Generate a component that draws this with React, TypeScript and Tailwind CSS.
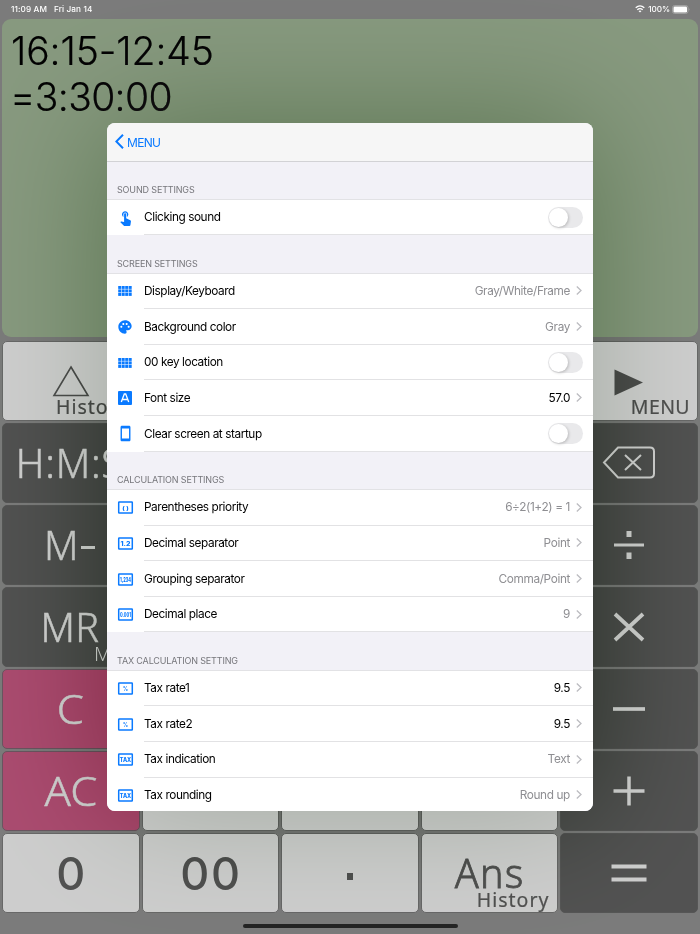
import React from "react";
import { MdTouchApp, MdPalette, MdStayCurrentPortrait } from "react-icons/md";

const UI = "font-['Inter','Liberation_Sans',sans-serif]";
const KEY = "font-['Noto_Sans','Open_Sans',sans-serif]";

type Tone = "light" | "dark" | "pink";

const tones: Record<Tone, string> = {
  light: "bg-[#cdcdcd] text-[#525252] border border-[#686868]",
  dark: "bg-[#525252] text-[#cdcdcd] border border-[#565656]",
  pink: "bg-[#aa4c70] text-[#cdcdcd] border border-[#6a5560]",
};

function Key({ tone, children }: { tone: Tone; children?: React.ReactNode }) {
  return (
    <div className={`relative flex items-center justify-center rounded-[5px] ${tones[tone]}`}>
      {children}
    </div>
  );
}

function Label({ children, className = "" }: { children: React.ReactNode; className?: string }) {
  return (
    <span
      className={`block whitespace-nowrap pt-[2px] text-[39.5px] font-light leading-none [-webkit-text-stroke:0.5px_currentColor] ${className}`}
    >
      {children}
    </span>
  );
}

function Sub({ children, className = "" }: { children: React.ReactNode; className?: string }) {
  return (
    <span className={`absolute whitespace-nowrap leading-none ${className}`}>{children}</span>
  );
}

function Stroke({ d, width = 4 }: { d: string; width?: number }) {
  return (
    <svg width="56" height="40" viewBox="-28 -20 56 40" fill="none" stroke="currentColor" strokeWidth={width}>
      <path d={d} />
    </svg>
  );
}

function Keypad() {
  return (
    <div
      className={`mx-[2px] mt-[3.5px] grid h-[572.5px] grid-cols-5 grid-rows-7 gap-x-[2px] gap-y-[1.5px] ${KEY}`}
    >
      <Key tone="light">
        <svg width="40" height="32" viewBox="-20 -16 40 32" fill="none" stroke="currentColor" strokeWidth="1.6">
          <path d="M0-14 17 14.500H-17Z" />
        </svg>
        <Sub className="left-[53px] top-[55.5px] text-[19.5px] tracking-[1px] [-webkit-text-stroke:0.2px_currentColor]">History</Sub>
      </Key>
      <Key tone="light" />
      <Key tone="light" />
      <Key tone="light" />
      <Key tone="light">
        <svg className="mt-[3px]" width="30" height="27" viewBox="0 0 30 27" fill="currentColor">
          <path d="M0.500 0.500 29 13.500 0.500 26.500Z" />
        </svg>
        <Sub className="right-[7px] top-[55.5px] text-[19.5px] tracking-[0.4px] [-webkit-text-stroke:0.2px_currentColor]">MENU</Sub>
      </Key>

      <Key tone="dark"><Label className="tracking-[0.8px] pr-[2px]">H:M:S</Label></Key>
      <Key tone="light" />
      <Key tone="light" />
      <Key tone="light" />
      <Key tone="dark">
        <svg width="54" height="34" viewBox="0 0 54 34" fill="none" stroke="currentColor" strokeWidth="2">
          <path d="M16 1.500H48Q52 1.500 52 5.500V27.500Q52 31.500 48 31.500H16L2 16.500Z" />
          <path d="M23 9 39 24M39 9 23 24" />
        </svg>
      </Key>

      <Key tone="dark">
        <Label className="flex items-center pr-[3px]">
          M<span className="ml-[2px] mt-[4px] h-[3px] w-[14px] bg-[#cdcdcd]" />
        </Label>
      </Key>
      <Key tone="light" />
      <Key tone="light" />
      <Key tone="light" />
      <Key tone="dark">
        <svg width="56" height="40" viewBox="-28 -20 56 40" fill="currentColor">
          <path d="M-15-1.500H15V1.500H-15ZM-2.500-14H2.500V-8H-2.500ZM-2.500 7.500H2.500V14H-2.500Z" />
        </svg>
      </Key>

      <Key tone="dark">
        <Label className="pr-[2px] tracking-[0.3px]">MR</Label>
        <Sub className="left-[91px] top-[56px] text-[20px] font-light">MC</Sub>
      </Key>
      <Key tone="light" />
      <Key tone="light" />
      <Key tone="light" />
      <Key tone="dark"><Stroke d="M-14-13 14 13M14-13-14 13" width={3.8} /></Key>

      <Key tone="pink"><Label className="scale-x-110">C</Label></Key>
      <Key tone="light" />
      <Key tone="light" />
      <Key tone="light" />
      <Key tone="dark"><Stroke d="M-16 0H16" width={3.7} /></Key>

      <Key tone="pink"><Label className="scale-x-110">AC</Label></Key>
      <Key tone="light" />
      <Key tone="light" />
      <Key tone="light" />
      <Key tone="dark"><Stroke d="M-15.500 0H15.500M0-14.500V14.500" width={3.5} /></Key>

      <Key tone="light">
        <span className="pt-[2px] font-['Inter',sans-serif] text-[45px] font-medium leading-none">0</span>
      </Key>
      <Key tone="light">
        <span className="pl-[1px] pt-[2px] font-['Inter',sans-serif] text-[45px] font-medium leading-none tracking-[1.500px]">00</span>
      </Key>
      <Key tone="light">
        <span className="mt-[7px] h-[7px] w-[6px] bg-[#525252]" />
      </Key>
      <Key tone="light">
        <Label className="tracking-[1.2px] [-webkit-text-stroke:0.8px_currentColor]">Ans</Label>
        <Sub className="right-[8px] top-[56px] text-[19.5px] tracking-[1px] [-webkit-text-stroke:0.2px_currentColor]">History</Sub>
      </Key>
      <Key tone="dark"><Stroke d="M-17.500-6.500H17.500M-17.500 6.500H17.500" width={3.800} /></Key>
    </div>
  );
}

function GridIcon() {
  return (
    <svg width="14" height="10" viewBox="0 0 14 10" fill="currentColor">
      {[0, 1, 2, 3].map((c) =>
        [0, 1, 2].map((r) => <rect key={`${c}-${r}`} x={c * 3.5 + 0.2} y={r * 3.5 - 0.1} width="3" height="3" />)
      )}
    </svg>
  );
}

function Box({ text, size, length }: { text: string; size: number; length: number }) {
  return (
    <svg className="overflow-visible" width="15" height="13" viewBox="0 0 15 13">
      <rect x="0.700" y="0.900" width="13.600" height="11.200" rx="0.500" fill="none" stroke="currentColor" strokeWidth="1.500" />
      <text
        x="7.500"
        y={6.6 + size * 0.36}
        fontSize={size}
        fontWeight="800"
        textAnchor="middle"
        textLength={length}
        lengthAdjust="spacingAndGlyphs"
        fill="currentColor"
      >
        {text}
      </text>
    </svg>
  );
}

function Toggle() {
  return (
    <span className="mr-[10px] flex h-[21px] w-[35px] items-center rounded-full bg-[#e9e9eb] p-[1px]">
      <span className="size-[19px] rounded-full bg-white shadow-[1px_1px_3px_rgba(0,0,0,0.2)]" />
    </span>
  );
}

interface RowProps {
  icon: React.ReactNode;
  label: string;
  value?: string;
  strong?: boolean;
}

function Row({ icon, label, value, strong }: RowProps) {
  return (
    <div className="flex h-[35.65px] items-stretch bg-white">
      <span className="mr-px flex w-[36px] items-center justify-center text-[#0a7aff]">{icon}</span>
      <div className="flex flex-1 items-center border-b border-[#e2e2e4]">
        <span className="flex-1 pt-[2px] text-[11.8px] tracking-[-0.42px] text-black">{label}</span>
        {value === undefined ? (
          <Toggle />
        ) : (
          <>
            <span className={`pt-[2px] text-[11.8px] tracking-[-0.36px] ${strong ? "text-black" : "text-[#8e8e92]"}`}>{value}</span>
            <svg className="ml-[6px] mr-[11px]" width="6" height="9" viewBox="0 0 6 9" fill="none" stroke="#bcbcc0" strokeWidth="1.300">
              <path d="M0.800 0.500 5 4.500 0.800 8.500" />
            </svg>
          </>
        )}
      </div>
    </div>
  );
}

function Section({ title, rows }: { title: string; rows: RowProps[] }) {
  return (
    <section>
      <h2 className="flex h-[38.2px] items-end border-b border-[#e2e2e5] pb-[4px] pl-[10px] text-[9px] leading-[11px] tracking-[-0.15px] text-[#76767b]">
        {title}
      </h2>
      {rows.map((r) => (
        <Row key={r.label} {...r} />
      ))}
    </section>
  );
}

function SettingsDialog() {
  return (
    <div className="absolute left-[107px] top-[123px] h-[688px] w-[486px] overflow-hidden rounded-[8px] bg-[#f2f1f7]">
      <header className="flex h-[38.5px] items-center border-b border-[#d2d2d5] bg-[#f6f6f6] pl-[8px] text-[#0a7aff]">
        <svg width="9" height="15" viewBox="0 0 9 15" fill="none" stroke="currentColor" strokeWidth="2">
          <path d="M8 0.800 1.300 7.500 8 14.200" />
        </svg>
        <span className="ml-[3px] mt-[2px] text-[12px] tracking-[-0.7px]">MENU</span>
      </header>
      <Section
        title="SOUND SETTINGS"
        rows={[{ icon: <MdTouchApp size={17} className="mb-px" />, label: "Clicking sound" }]}
      />
      <Section
        title="SCREEN SETTINGS"
        rows={[
          { icon: <GridIcon />, label: "Display/Keyboard", value: "Gray/White/Frame" },
          { icon: <MdPalette size={16} />, label: "Background color", value: "Gray" },
          { icon: <GridIcon />, label: "00 key location" },
          {
            icon: (
              <svg width="14" height="14" viewBox="0 0 14 14">
                <rect width="14" height="14" rx="1" fill="currentColor" />
                <path d="M3.300 11 6.300 3H7.700L10.700 11M4.300 8.500H9.700" fill="none" stroke="white" strokeWidth="1.300" />
              </svg>
            ),
            label: "Font size",
            value: "57.0",
            strong: true,
          },
          { icon: <MdStayCurrentPortrait size={17} />, label: "Clear screen at startup" },
        ]}
      />
      <Section
        title="CALCULATION SETTINGS"
        rows={[
          { icon: <Box text="( )" size={5.5} length={6.5} />, label: "Parentheses priority", value: "6÷2(1+2) = 1" },
          { icon: <Box text="1.2" size={6} length={10} />, label: "Decimal separator", value: "Point" },
          { icon: <Box text="1,234" size={6.5} length={11} />, label: "Grouping separator", value: "Comma/Point" },
          { icon: <Box text="0.001" size={6} length={11} />, label: "Decimal place", value: "9" },
        ]}
      />
      <Section
        title="TAX CALCULATION SETTING"
        rows={[
          { icon: <Box text="%" size={5.5} length={5} />, label: "Tax rate1", value: "9.5", strong: true },
          { icon: <Box text="%" size={5.5} length={5} />, label: "Tax rate2", value: "9.5", strong: true },
          { icon: <Box text="TAX" size={6} length={11.5} />, label: "Tax indication", value: "Text" },
          { icon: <Box text="TAX" size={6} length={11.5} />, label: "Tax rounding", value: "Round up" },
        ]}
      />
    </div>
  );
}

export default function App() {
  return (
    <div className={`relative flex h-[934px] w-[700px] flex-col overflow-hidden bg-[#7b7b7b] ${UI}`}>
      <div className="flex h-[19px] items-center pb-px pl-[11px] pr-[10px] text-[8.2px] font-medium leading-none tracking-[0.1px] text-white">
        <span>11:09 AM</span>
        <span className="ml-[7px]">Fri Jan 14</span>
        <span className="flex-1" />
        <svg width="10" height="8" viewBox="0 0 10 8" fill="none" stroke="white" strokeWidth="1.300">
          <path d="M0.700 2.800Q5-1.100 9.300 2.800M2.300 4.700Q5 2.400 7.700 4.700" />
          <path d="M3.500 6 5 7.500 6.500 6Q5 4.900 3.500 6Z" fill="white" stroke="none" />
        </svg>
        <span className="ml-[3px] tracking-[-0.1px]">100%</span>
        <svg className="ml-[2px]" width="18" height="9" viewBox="0 0 18 9">
          <rect x="0.500" y="0.500" width="15.500" height="8" rx="2.200" fill="none" stroke="#a5a5a5" strokeWidth="0.900" />
          <rect x="1.500" y="1.500" width="13.500" height="6" rx="1.200" fill="white" />
          <path d="M16.900 3V6Q18 4.500 16.900 3Z" fill="#b5b5b5" />
        </svg>
      </div>
      <div className="mx-[2px] h-[318px] rounded-[9px] bg-[#87997f] pl-[9px] pt-[8.5px] text-[39px] font-[350] leading-[46px] text-black [-webkit-text-stroke:0.2px_currentColor]">
        <div className="tracking-[-0.1px]">16:15-12:45</div>
        <div className="-ml-px tracking-[-0.65px]">=3:30:00</div>
      </div>
      <Keypad />
      <div className="mx-auto mt-[11px] h-[4px] w-[215px] rounded-full bg-[#252525]" />
      <div className="absolute left-[107px] top-[123px] h-[688px] w-[486px] rounded-[8px] mix-blend-difference shadow-[0_0_130px_rgb(46,38,48)]" />
      <SettingsDialog />
    </div>
  );
}
